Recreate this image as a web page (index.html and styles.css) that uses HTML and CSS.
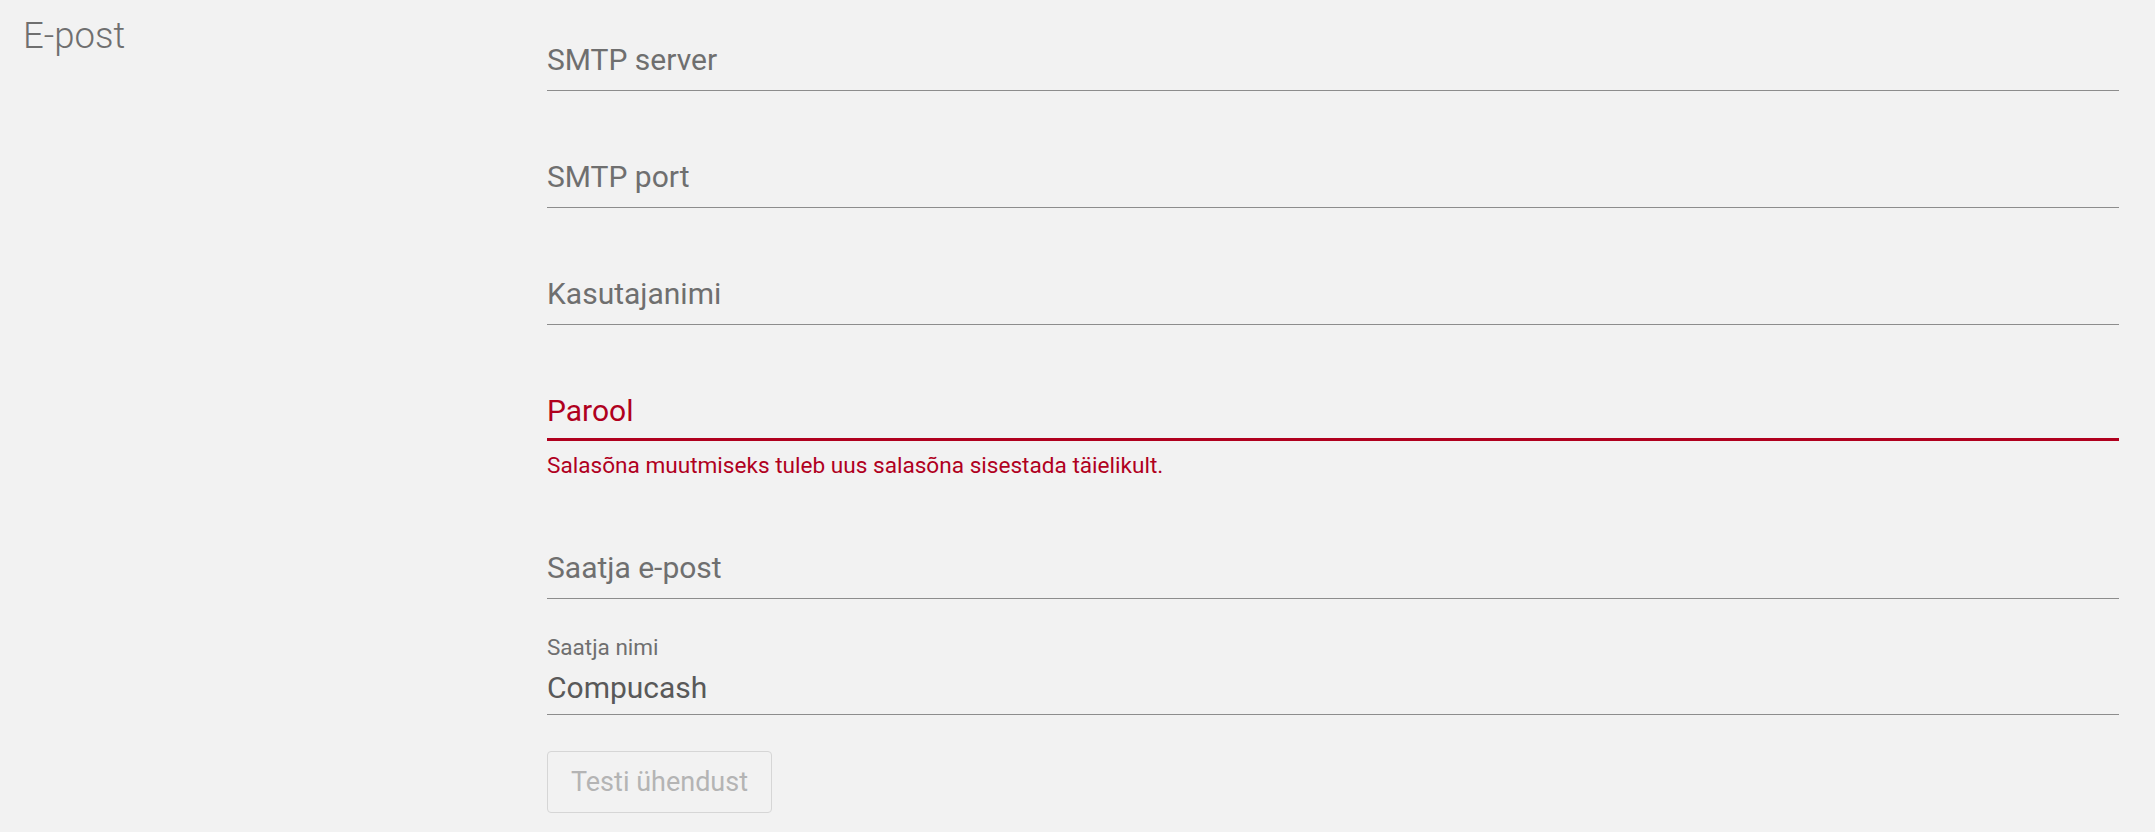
FILE: index.html
```html
<!DOCTYPE html>
<html lang="et">
<head>
<meta charset="utf-8">
<title>E-post</title>
<link rel="stylesheet" href="styles.css">
</head>
<body>
<div class="page">
  <section class="section">
    <h2 class="section-title">E-post</h2>
    <form class="form">
      <div class="field field--first">
        <div class="control"><span class="placeholder">SMTP server</span></div>
      </div>
      <div class="field">
        <div class="control"><span class="placeholder">SMTP port</span></div>
      </div>
      <div class="field">
        <div class="control"><span class="placeholder">Kasutajanimi</span></div>
      </div>
      <div class="field field--error">
        <div class="control control--error"><span class="placeholder placeholder--error">Parool</span></div>
        <div class="error-text">Salasõna muutmiseks tuleb uus salasõna sisestada täielikult.</div>
      </div>
      <div class="field">
        <div class="control"><span class="placeholder">Saatja e-post</span></div>
      </div>
      <div class="field field--filled">
        <label class="float-label">Saatja nimi</label>
        <div class="control control--filled"><span class="value">Compucash</span></div>
      </div>
      <div class="actions">
        <button type="button" class="btn" disabled>Testi ühendust</button>
      </div>
    </form>
  </section>
</div>
</body>
</html>
```

FILE: styles.css
```css
* { box-sizing: border-box; }

html, body {
  margin: 0;
  background: #f2f2f2;
}

body {
  font-family: Roboto, "Noto Sans", sans-serif;
  color: #6f6f6f;
}

.page {
  padding: 0 36px 0 23px;
}

.section {
  display: grid;
  grid-template-columns: 524px 1fr;
}

.section-title {
  margin: 14px 0 0;
  font-size: 36.5px;
  line-height: 44px;
  font-weight: 300;
  color: #6f6f6f;
}

.form {
  display: flex;
  flex-direction: column;
}

.field {
  height: 117px;
  display: flex;
  flex-direction: column;
  justify-content: flex-end;
}

.field--first {
  height: 91px;
}

.field--error {
  height: 157px;
}

.field--filled {
  height: 116px;
}

.control {
  height: 51px;
  padding-bottom: 10px;
  border-bottom: 1px solid #8d8d8d;
  font-size: 30px;
  line-height: 40px;
}

.control--error {
  height: 50px;
  padding-bottom: 7px;
  border-bottom: 3px solid #b0001e;
}

.control--filled {
  height: 47px;
  padding-bottom: 6px;
}

.placeholder {
  color: #6f6f6f;
}

.placeholder--error {
  color: #b0001e;
}

.value {
  color: #595959;
}

.float-label {
  display: block;
  font-size: 22.5px;
  line-height: 26px;
  color: #6f6f6f;
  margin-bottom: 8px;
}

.error-text {
  margin-top: 12px;
  padding-bottom: 3px;
  font-size: 22.6px;
  line-height: 26px;
  color: #b0001e;
}

.actions {
  display: flex;
  margin-top: 36px;
}

.btn {
  font-family: Roboto, "Noto Sans", sans-serif;
  font-size: 27px;
  line-height: 36px;
  height: 62px;
  padding: 0 23px;
  background: transparent;
  border: 1px solid #d6d6d6;
  border-radius: 4px;
  color: #b4b4b4;
}
```
